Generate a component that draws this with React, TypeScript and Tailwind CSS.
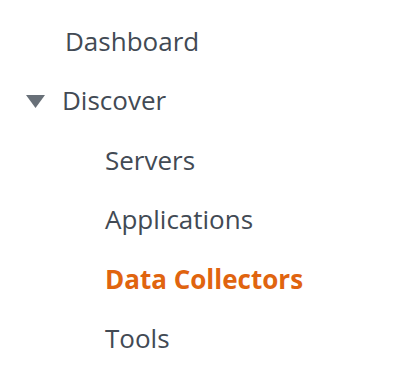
import React from "react";

const sub = [
  { label: "Servers", active: false },
  { label: "Applications", active: false },
  { label: "Data Collectors", active: true },
  { label: "Tools", active: false },
];

export default function App() {
  return (
    <nav
      className="h-[386px] w-[420px] bg-white pt-[11px] text-[26px] leading-none text-[#424a54]"
      style={{ fontFamily: '"Open Sans", "Noto Sans", Arial, sans-serif' }}
    >
      <ul>
        <li className="flex h-[59.5px] items-center pl-[65px]">
          <a href="#">Dashboard</a>
        </li>
        <li>
          <button className="flex h-[59.5px] items-center pl-[26px]">
            <svg width="19" height="13" viewBox="0 0 19 13" className="mr-[17px] mt-[2px]">
              <polygon points="0,0 19,0 9.5,13" fill="#687078" />
            </svg>
            Discover
          </button>
          <ul>
            {sub.map((s) => (
              <li key={s.label} className="flex h-[59.5px] items-center pl-[105px]">
                <a
                  href="#"
                  className={s.active ? "font-bold text-[#e0640f]" : ""}
                >
                  {s.label}
                </a>
              </li>
            ))}
          </ul>
        </li>
      </ul>
    </nav>
  );
}
